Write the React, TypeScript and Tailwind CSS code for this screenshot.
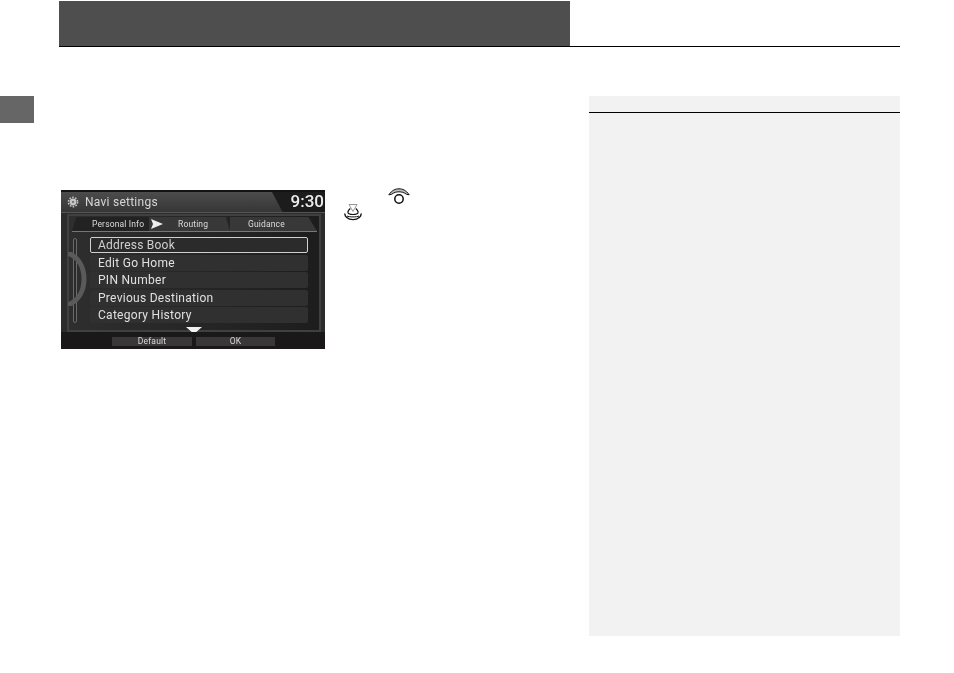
const font = { fontFamily: '"Liberation Sans", Arial, sans-serif' };
const screenFont = { fontFamily: 'Roboto, "Liberation Sans", sans-serif' };

function Row({ label, active }: { label: string; active?: boolean }) {
  return (
    <div
      className={
        active
          ? "h-[16px] rounded-[2px] border border-[#d0d0d0] bg-[#2b2b2b] pl-[7px] flex items-center text-[12px] tracking-[0.22px] text-[#cfcfcf]"
          : "h-[16px] rounded-[2px] bg-[#303030] pl-[8px] flex items-center text-[12px] tracking-[0.28px] text-[#e0e0e0]"
      }
    >
      {label}
    </div>
  );
}

function NaviScreen() {
  return (
    <div className="relative w-[264px] h-[159px] bg-[#2c2c2c] overflow-hidden" style={screenFont}>
      <div className="h-[2px] bg-[#141414]" />
      <div className="relative h-[21px] flex items-center bg-gradient-to-b from-[#4c4c4c] to-[#363636] border-b border-[#555]">
        <svg width="12" height="12" viewBox="0 0 12 12" className="ml-[6px] shrink-0">
          <circle cx="6" cy="6" r="3.4" fill="#c4c4c4" />
          <circle cx="6" cy="6" r="4.6" fill="none" stroke="#c4c4c4" strokeWidth="1.6" strokeDasharray="1.6 1.3" />
          <circle cx="6" cy="6" r="1.1" fill="#666" />
        </svg>
        <span className="ml-[6px] text-[12px] tracking-[0.25px] text-[#d6d6d6]">Navi settings</span>
        <div className="absolute right-0 top-0 bottom-0 w-[53px] bg-[#1c1c1c] [clip-path:polygon(0_0,100%_0,100%_100%,20%_100%)]" />
        <span className="absolute right-[1px] -top-[1px] text-[17px] font-medium leading-[20px] text-[#ececec]">9:30</span>
      </div>

      <div className="ml-[6px] mr-[4px] mt-[1px] h-[118px] border-[2px] border-[#404040] bg-gradient-to-r from-[#2e2e2e] via-[#262626] to-[#1d1d1d]">
        <div className="relative h-[15px] flex border-b border-[#777] ml-[3px] mr-[2px] mt-[1px] text-[8.5px] tracking-[0.15px] text-[#dcdcdc]">
          <div className="w-[77px] pl-[20px] bg-[#222222] flex items-center [clip-path:polygon(6%_0,100%_0,100%_100%,0_100%)]">Personal Info</div>
          <div className="w-[81px] pl-[29px] bg-[#383838] flex items-center [clip-path:polygon(0_0,95%_0,100%_100%,0_100%)]">Routing</div>
          <div className="flex-1 pl-[18px] bg-[#383838] flex items-center [clip-path:polygon(0_0,90%_0,100%_100%,0_100%)]">Guidance</div>
        </div>
        <div className="relative ml-[21px] mr-[11px] mt-[5px] flex flex-col gap-[1.5px]">
          <Row label="Address Book" active />
          <Row label="Edit Go Home" />
          <Row label="PIN Number" />
          <Row label="Previous Destination" />
          <Row label="Category History" />
        </div>
      </div>

      {/* scroll rail */}
      <div className="absolute left-[12px] top-[48px] h-[85px] w-[4px] rounded-[2px] border border-[#6a6a6a] bg-[#2a2a2a]" />
      {/* decorative arc */}
      <svg className="absolute left-[7px] top-[62px]" width="22" height="54" viewBox="0 0 22 54">
        <path d="M0 1 C12 6 16 17 16 27 C16 37 12 48 0 53" fill="none" stroke="#5a5a5a" strokeWidth="5" />
      </svg>
      {/* tab arrow */}
      <svg className="absolute left-[89px] top-[29px]" width="13" height="10" viewBox="0 0 13 10">
        <path d="M1 0 L13 5 L1 10 L3 5 Z" fill="#efefef" />
      </svg>
      {/* down arrow */}
      <svg className="absolute left-[125px] top-[137px]" width="16" height="7" viewBox="0 0 16 7">
        <path d="M0 0 L16 0 L8 7 Z" fill="#f2f2f2" />
      </svg>

      <div className="absolute left-0 right-0 bottom-0 h-[17px] bg-[#1a1818] flex items-center pl-[51px] gap-[4px] text-[8.5px] tracking-[0.2px] text-[#d8d8d8]">
        <div className="w-[80px] h-[9px] mt-[1px] bg-[#383838] flex items-center justify-center">Default</div>
        <div className="w-[79px] h-[9px] mt-[1px] bg-[#383838] flex items-center justify-center">OK</div>
      </div>
    </div>
  );
}

function DialIcon() {
  return (
    <svg width="22" height="17" viewBox="0 0 22 17" className="block">
      <circle cx="11" cy="11" r="4.2" fill="none" stroke="#111" strokeWidth="1.5" />
      <path
        d="M0.8 6.8 C4 2.2 7.5 0.8 11 0.8 C14.5 0.8 18 2.2 21.2 6.8 L18.5 6.3 C16 4.4 13.5 3.8 11 3.8 C8.5 3.8 6 4.4 3.5 6.3 Z"
        fill="#bdbdbd"
        stroke="#111"
        strokeWidth="1"
        strokeLinejoin="round"
      />
    </svg>
  );
}

function PushIcon() {
  return (
    <svg width="18" height="17" viewBox="0 0 18 17" className="block">
      <path d="M5 0.5 H13 L9 7.5 Z" fill="none" stroke="#8a8a8a" strokeWidth="0.9" />
      <path d="M6.2 4.5 C2.5 8 3 10.5 9 10.5 C15 10.5 15.5 8 11.8 4.5" fill="none" stroke="#111" strokeWidth="1.1" />
      <path d="M1 9.5 C0.5 12 3.5 15.6 9 15.6 C14.5 15.6 17.5 12 17 9.5" fill="none" stroke="#111" strokeWidth="1.4" />
      <path d="M3 12 C5 13.2 13 13.2 15 12" fill="none" stroke="#111" strokeWidth="1" />
    </svg>
  );
}

export default function App() {
  return (
    <div className="w-[954px] h-[673px] bg-white overflow-hidden pt-px" style={font}>
      <div className="ml-[59px] w-[841px] h-[46px] border-b border-black">
        <div className="w-[511px] h-[45px] bg-[#4e4e4e]" />
      </div>
      <div className="mt-[49px] flex items-start">
        <div className="w-[34px] h-[27px] bg-[#666666]" />
        <div className="ml-[27px] mt-[94px] w-[264px] overflow-hidden">
          <div className="blur-[0.4px]">
            <NaviScreen />
          </div>
        </div>
        <div className="ml-[19px] mt-[92px] w-[66px] h-[34px] flex">
          <div className="mt-[16px]"><PushIcon /></div>
          <div className="ml-[26px]"><DialIcon /></div>
        </div>
        <div className="ml-[179px] w-[311px] h-[540px] bg-[#f2f2f2]">
          <div className="h-[17px] border-b border-black" />
        </div>
      </div>
    </div>
  );
}
